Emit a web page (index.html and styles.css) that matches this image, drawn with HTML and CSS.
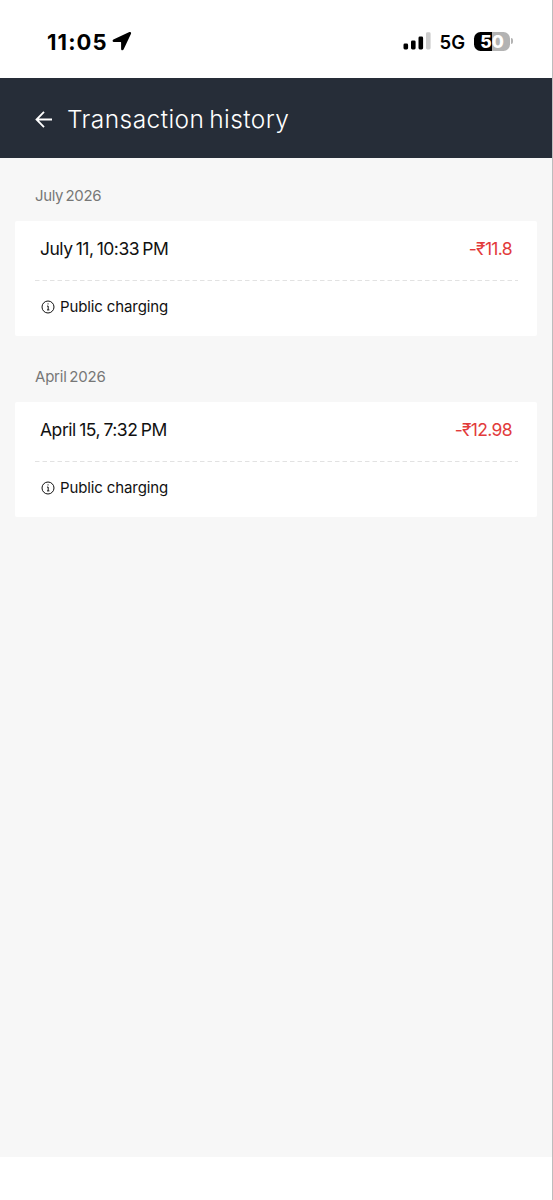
FILE: index.html
```html
<!DOCTYPE html>
<html lang="en">
<head>
<meta charset="utf-8">
<meta name="viewport" content="width=device-width, initial-scale=1">
<title>Transaction history</title>
<link rel="stylesheet" href="styles.css">
</head>
<body>
<div class="screen">
  <div class="status-bar">
    <div class="status-left">
      <span class="clock">11:05</span>
      <svg class="location" width="20" height="20" viewBox="0 0 20 20"><path d="M17.400 1.100 1.400 8.400C.1 9.100.4 10.900 1.900 10.900H8.600Q9.100 10.900 9.100 11.400V17.900C9.100 19.400 11 19.700 11.700 18.300L19 2.700C19.500 1.400 18.600.6 17.400 1.100Z"/></svg>
    </div>
    <div class="status-right">
      <svg class="signal" width="28" height="18" viewBox="0 0 28 18"><rect x="0.500" y="11.500" width="4.600" height="6" rx="1.400"/><rect x="8" y="8.400" width="4.600" height="9.100" rx="1.400"/><rect x="15.500" y="4.600" width="4.600" height="12.900" rx="1.400"/><rect class="muted" x="23" y="0.300" width="4.600" height="17.200" rx="1.400"/></svg>
      <span class="network">5G</span>
      <div class="battery"><span class="battery-level"><b class="digit-on">5</b><b class="digit-off">0</b></span><i class="battery-tip"></i></div>
    </div>
  </div>
  <header class="app-bar">
    <svg class="back" width="18" height="18" viewBox="0 0 18 18"><path d="M17 9.500H1.500M9 1.800 1.500 9.500 9 17.200"/></svg>
    <h1 class="title">Transaction history</h1>
  </header>
  <main class="history">
    <section class="group">
      <h2 class="month">July 2026</h2>
      <article class="card">
        <div class="summary"><span class="date">July 11, 10:33 PM</span><span class="amount">-₹11.8</span></div>
        <svg class="divider" width="483" height="2"><path d="M0 1.500H483"/></svg>
        <div class="detail"><svg class="info" width="14" height="14" viewBox="0 0 14 14"><circle cx="7" cy="7" r="6"/><path d="M6 6.100H7.200V9.800M6 9.900H8.400M6.500 3.900H7.600"/></svg><span class="kind">Public charging</span></div>
      </article>
    </section>
    <section class="group">
      <h2 class="month month-april">April 2026</h2>
      <article class="card">
        <div class="summary"><span class="date date-april">April 15, 7:32 PM</span><span class="amount">-₹12.98</span></div>
        <svg class="divider" width="483" height="2"><path d="M0 1.500H483"/></svg>
        <div class="detail"><svg class="info" width="14" height="14" viewBox="0 0 14 14"><circle cx="7" cy="7" r="6"/><path d="M6 6.100H7.200V9.800M6 9.900H8.400M6.500 3.900H7.600"/></svg><span class="kind">Public charging</span></div>
      </article>
    </section>
  </main>
  <footer class="home-area"></footer>
</div>
</body>
</html>
```
FILE: styles.css
```css
* { box-sizing: border-box; }
body { margin: 0; font-family: Inter, "Liberation Sans", sans-serif; background: #fff; }
.screen { display: flex; flex-direction: column; width: 553px; height: 1200px; border-right: 1px solid #bdbdbd; overflow: hidden; }
.status-bar { display: flex; flex: none; justify-content: space-between; height: 78px; padding: 28px 39px 0 47px; color: #000; }
.status-left, .status-right { display: flex; align-items: center; height: 26px; }
.clock { padding-top: 1px; font-size: 22px; line-height: 26px; font-weight: 700; letter-spacing: 1.100px; }
.location { margin-left: 4px; }
.signal { margin-right: 10px; }
.signal .muted { fill: #ccc; }
.network { margin-left: -1px; padding-top: 1px; font-size: 18.500px; line-height: 26px; font-weight: 600; }
.battery { display: flex; align-items: center; margin-left: 9px; gap: 1px; }
.battery-level { display: flex; justify-content: center; width: 36px; height: 19px; border-radius: 6.500px; background: linear-gradient(90deg, #000 50%, #b3b3b3 50%); color: #fff; font-size: 17.500px; line-height: 19px; }
.digit-on, .digit-off { font-weight: 800; }
.battery-tip { width: 2px; height: 6px; border-radius: 0 2px 2px 0; background: #b3b3b3; }
.app-bar { display: flex; flex: none; align-items: center; height: 80px; padding: 2px 35px 0; background: #262d38; color: #fff; }
.back { margin-right: 14px; fill: none; stroke: #fff; stroke-width: 1.800; }
.title { margin: 0; font-size: 24.500px; line-height: 30px; font-weight: 350; letter-spacing: 0.430px; word-spacing: -2.500px; white-space: nowrap; }
.history { flex: 1; padding: 28px 15px 0; background: #f7f7f7; }
.group { height: 181px; }
.month { margin: 0 0 15px; padding-left: 20px; font-size: 15px; line-height: 20px; font-weight: 400; letter-spacing: -0.380px; word-spacing: -1.300px; color: #777; }
.month-april { letter-spacing: -0.220px; }
.card { height: 115px; padding: 0 19px 0 20px; border-radius: 2px; background: #fff; }
.summary { display: flex; justify-content: space-between; align-items: center; height: 58px; padding: 0 6px 2px 5px; font-size: 17.500px; line-height: 24px; font-weight: 400; color: #111; }
.date { letter-spacing: -0.500px; word-spacing: -1.200px; }
.date-april { letter-spacing: -0.450px; }
.amount { color: #e23b3b; letter-spacing: -0.650px; }
.divider { display: block; stroke: #e2e2e2; stroke-width: 1; stroke-dasharray: 4.500 3; }
.detail { display: flex; align-items: center; height: 51px; padding-left: 6px; gap: 5px; font-size: 15px; line-height: 20px; font-weight: 400; letter-spacing: -0.120px; color: #111; }
.info { fill: none; stroke: #111; stroke-width: 1; }
.home-area { flex: none; height: 43px; background: #fff; }
```
